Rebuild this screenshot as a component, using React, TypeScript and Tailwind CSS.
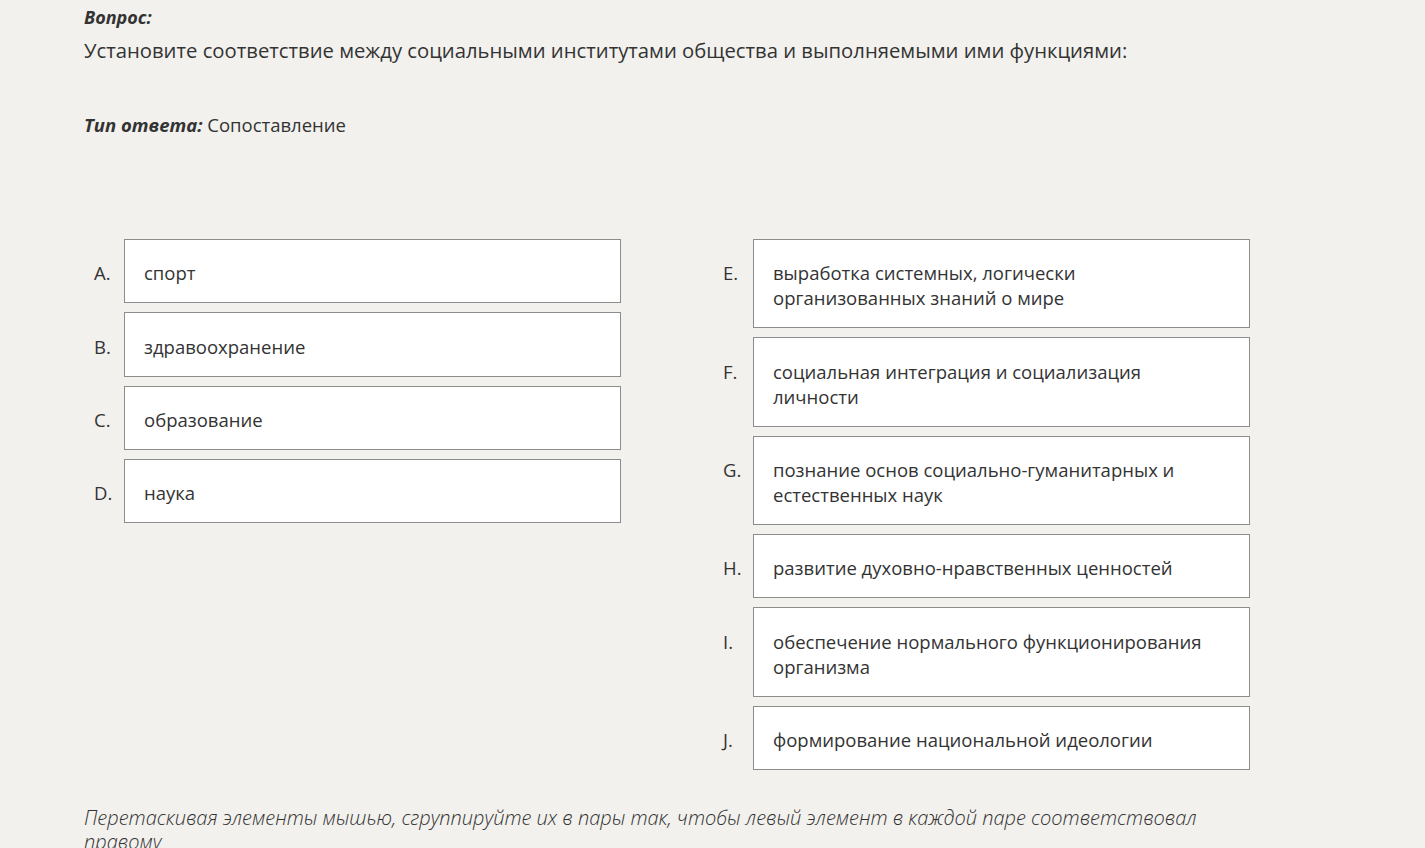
import React from "react";

const left = [
  { l: "A.", t: "спорт" },
  { l: "B.", t: "здравоохранение" },
  { l: "C.", t: "образование" },
  { l: "D.", t: "наука" },
];
const right = [
  { l: "E.", t: "выработка системных, логически организованных знаний о мире" },
  { l: "F.", t: "социальная интеграция и социализация личности" },
  { l: "G.", t: "познание основ социально-гуманитарных и естественных наук" },
  { l: "H.", t: "развитие духовно-нравственных ценностей" },
  { l: "I.", t: "обеспечение нормального функционирования организма" },
  { l: "J.", t: "формирование национальной идеологии" },
];

function Row({ l, t }: { l: string; t: string }) {
  return (
    <div className="flex items-start">
      <div className="w-[30px] shrink-0 pt-[21.33px] leading-[25px] text-[18.5px]">{l}</div>
      <div className="w-[497px] shrink-0 border border-[#8c8c8c] bg-white pl-[19px] pr-[30px] pt-[20.33px] pb-[17px] text-[18.5px] leading-[25px]">
        {t}
      </div>
    </div>
  );
}

export default function App() {
  return (
    <div
      className="min-h-[848px] bg-[#f2f1ee] text-[#333333] pl-[84px]"
      style={{ fontFamily: '"Open Sans", "Noto Sans", sans-serif' }}
    >
      <div className="pt-[4px] text-[18px] leading-[26px] font-bold italic">Вопрос:</div>
      <div className="mt-[6px] text-[20.25px] leading-[28px]">
        Установите соответствие между социальными институтами общества и выполняемыми ими функциями:
      </div>
      <div className="mt-[48px] text-[18.5px] leading-[26px]">
        <span className="font-bold italic">Тип ответа:</span> Сопоставление
      </div>
      <div className="mt-[101px] flex pl-[10px] gap-[102px]">
        <div className="flex flex-col gap-[9px]">
          {left.map((r) => (
            <Row key={r.l} {...r} />
          ))}
        </div>
        <div className="flex flex-col gap-[9px]">
          {right.map((r) => (
            <Row key={r.l} {...r} />
          ))}
        </div>
      </div>
      <div className="mt-[36px] w-[1150px] text-[20px] leading-[24px] italic font-light">
        Перетаскивая элементы мышью, сгруппируйте их в пары так, чтобы левый элемент в каждой паре соответствовал правому
      </div>
    </div>
  );
}
